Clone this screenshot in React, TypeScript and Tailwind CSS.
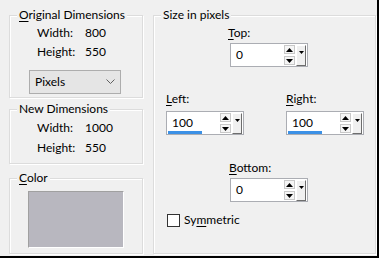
import React from "react";

function Legend({ children }: { children: React.ReactNode }) {
  return (
    <span className="absolute -top-[9px] left-[7px] px-[2px] bg-[#f0f0f0] leading-[16px] text-[12px] text-black whitespace-nowrap">
      {children}
    </span>
  );
}

function Group({ className, title, children }: { className: string; title: React.ReactNode; children?: React.ReactNode }) {
  return (
    <div className={"relative border border-[#dcdcdc] shadow-[inset_1px_1px_0_#ffffff,1px_1px_0_#ffffff] " + className}>
      <Legend>{title}</Legend>
      {children}
    </div>
  );
}

function U({ children }: { children: React.ReactNode }) {
  return <span className="underline underline-offset-[2px] decoration-[1px]">{children}</span>;
}

function Row({ label, value, className = "" }: { label: string; value: string; className?: string }) {
  return (
    <div className={"flex h-[16px] items-center leading-[16px] text-[12px] " + className}>
      <span className="w-[48px]">{label}</span>
      <span>{value}</span>
    </div>
  );
}

function Spin({ value, bar = false }: { value: string; bar?: boolean }) {
  return (
    <div className="relative flex h-[24px] w-[78px] items-center border border-[#abadb3] bg-white">
      <span className="flex-1 pl-[5px] text-[12px] leading-[16px] text-black">{value}</span>
      <div className="mr-[1px] flex h-[20px] w-[11px] flex-col justify-between">
        <div className="flex h-[9px] items-center justify-center border border-[#c8c8c8] bg-[#f5f5f5]">
          <svg width="7" height="4" viewBox="0 0 7 4"><path d="M0 4 L3.5 0 L7 4 Z" fill="#000" /></svg>
        </div>
        <div className="flex h-[9px] items-center justify-center border border-[#c8c8c8] bg-[#f5f5f5]">
          <svg width="7" height="4" viewBox="0 0 7 4"><path d="M0 0 L3.5 4 L7 0 Z" fill="#000" /></svg>
        </div>
      </div>
      <div className="mr-[1px] flex h-[21px] w-[10px] flex-col items-center border-l border-t border-l-white border-t-white border-r border-b border-r-[#6d6d6d] border-b-[#6d6d6d] bg-[#f0f0f0] pt-[5px]">
        <svg width="5" height="3" viewBox="0 0 5 3"><path d="M0 0 L2.5 3 L5 0 Z" fill="#000" /></svg>
      </div>
      {bar && <div className="absolute bottom-[0px] left-[1px] h-[3px] w-[34px] bg-[#3c91e6]" />}
    </div>
  );
}

export default function App() {
  return (
    <div className="flex h-[258px] w-[379px] border-b-2 border-r-2 border-black bg-[#f0f0f0] pt-[15px] font-['Lato',sans-serif] text-[12px] text-black">
      {/* Left column */}
      <div className="ml-[9px] flex w-[134px] flex-col">
        <Group className="h-[83px] pl-[19px] pt-[9px]" title={<><U>O</U>riginal Dimensions</>}>
          <div className="flex flex-col gap-[3px]">
            <Row className="ml-[8px]" label="Width:" value="800" />
            <Row className="ml-[8px]" label="Height:" value="550" />
          </div>
          <div className="mt-[10px] flex h-[24px] w-[92px] items-center justify-between border border-[#adadad] bg-[#e5e5e5] pl-[5px] pr-[5px]">
            <span className="leading-[16px]">Pixels</span>
            <svg width="9" height="6" viewBox="0 0 9 6"><path d="M0.5 0.5 L4.5 4.5 L8.5 0.5" stroke="#606060" strokeWidth="1" fill="none" /></svg>
          </div>
        </Group>
        <Group className="mt-[11px] h-[55px] pl-[27px] pt-[10px]" title="New Dimensions">
          <div className="flex flex-col gap-[4px]">
            <Row label="Width:" value="1000" />
            <Row label="Height:" value="550" />
          </div>
        </Group>
        <Group className="mt-[14px] h-[76px] pl-[18px] pt-[12px]" title={<><U>C</U>olor</>}>
          <div className="h-[57px] w-[96px] border border-b-white border-r-white border-l-[#a0a0a0] border-t-[#a0a0a0] bg-[#b8b7bf]" />
        </Group>
      </div>
      {/* Right column */}
      <div className="ml-[10px] flex w-[223px] flex-col">
        <Group className="h-[239px] pt-[9px]" title="Size in pixels">
          <div className="ml-[74px] flex flex-col items-start">
            <span className="h-[16px] leading-[16px]"><U>T</U>op:</span>
            <div className="ml-[2px] mt-[2px]"><Spin value="0" /></div>
          </div>
          <div className="mt-[24px] flex">
            <div className="ml-[12px] flex flex-col">
              <span className="h-[16px] leading-[16px]"><U>L</U>eft:</span>
              <div className="mt-[4px]"><Spin value="100" bar /></div>
            </div>
            <div className="ml-[42px] flex flex-col">
              <span className="h-[16px] leading-[16px]"><U>R</U>ight:</span>
              <div className="mt-[4px]"><Spin value="100" bar /></div>
            </div>
          </div>
          <div className="ml-[75px] mt-[25px] flex flex-col items-start">
            <span className="h-[16px] leading-[16px]"><U>B</U>ottom:</span>
            <div className="ml-[1px] mt-[2px]"><Spin value="0" /></div>
          </div>
          <div className="ml-[13px] mt-[10px] flex items-center gap-[4px]">
            <div className="h-[13px] w-[13px] border border-[#333333] bg-white" />
            <span className="leading-[16px]">Sy<U>m</U>metric</span>
          </div>
        </Group>
      </div>
    </div>
  );
}
